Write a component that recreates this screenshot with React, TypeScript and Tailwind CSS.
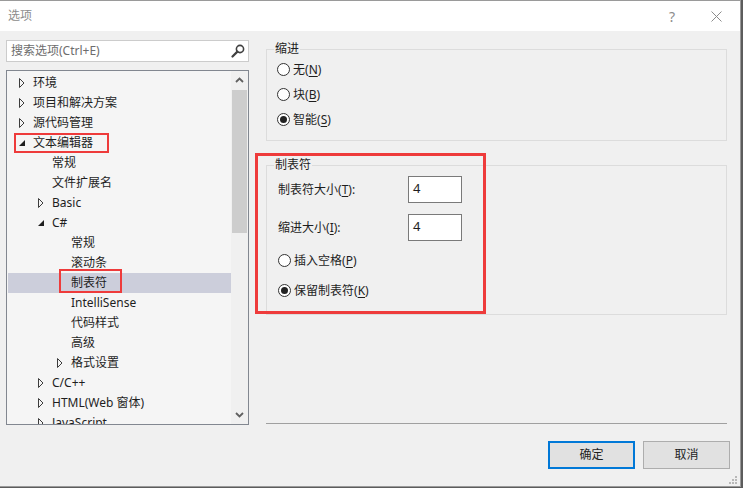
import React from "react";

type Node = {
  label: string;
  level: number;
  arrow?: "closed" | "open";
  selected?: boolean;
};

const tree: Node[] = [
  { label: "环境", level: 0, arrow: "closed" },
  { label: "项目和解决方案", level: 0, arrow: "closed" },
  { label: "源代码管理", level: 0, arrow: "closed" },
  { label: "文本编辑器", level: 0, arrow: "open" },
  { label: "常规", level: 1 },
  { label: "文件扩展名", level: 1 },
  { label: "Basic", level: 1, arrow: "closed" },
  { label: "C#", level: 1, arrow: "open" },
  { label: "常规", level: 2 },
  { label: "滚动条", level: 2 },
  { label: "制表符", level: 2, selected: true },
  { label: "IntelliSense", level: 2 },
  { label: "代码样式", level: 2 },
  { label: "高级", level: 2 },
  { label: "格式设置", level: 2, arrow: "closed" },
  { label: "C/C++", level: 1, arrow: "closed" },
  { label: "HTML(Web 窗体)", level: 1, arrow: "closed" },
  { label: "JavaScript", level: 1, arrow: "closed" },
];

const indent = ["pl-[6px]", "pl-[25px]", "pl-[44px]"];

function Arrow({ kind }: { kind?: "closed" | "open" }) {
  if (kind === "closed")
    return (
      <svg width="6" height="10" viewBox="0 0 6 10">
        <path d="M0.5 0.5 L5 5 L0.5 9.5 Z" fill="none" stroke="#3c3c3c" />
      </svg>
    );
  if (kind === "open")
    return (
      <svg width="6" height="6" viewBox="0 0 6 6">
        <path d="M6 0 L6 6 L0 6 Z" fill="#1e1e1e" />
      </svg>
    );
  return null;
}

function Radio({ checked, children }: { checked?: boolean; children: React.ReactNode }) {
  return (
    <div className="flex h-[25px] items-center">
      <span className="flex h-[13px] w-[13px] items-center justify-center rounded-full border border-[#333] bg-white">
        {checked && <span className="h-[7px] w-[7px] rounded-full bg-[#222]" />}
      </span>
      <span className="ml-[3px]">{children}</span>
    </div>
  );
}

function Key({ k }: { k: string }) {
  return (
    <>
      (<span className="underline underline-offset-2">{k}</span>)
    </>
  );
}

export default function App() {
  return (
    <div className="h-[488px] w-[743px] bg-[#5c5c5c] font-['Noto_Sans','Noto_Sans_CJK_SC',sans-serif] text-[12px] text-[#1e1e1e]">
      <div className="relative flex h-[487px] w-[741px] flex-col border-y border-r border-[#9a9a9a] bg-[#f0f0f0]">
        {/* title bar */}
        <div className="flex h-[30px] shrink-0 items-center bg-white pl-[8px]">
          <span className="text-[#8c8c8c]">选项</span>
          <span className="ml-auto mr-[36px] text-[14px] text-[#8c8c8c]">?</span>
          <svg width="11" height="11" viewBox="0 0 11 11" className="mr-[18px]">
            <path d="M0.5 0.5 L10.5 10.5 M10.5 0.5 L0.5 10.5" stroke="#8c8c8c" strokeWidth="1" />
          </svg>
        </div>

        <div className="flex flex-1">
          {/* left column */}
          <div className="w-[249px] shrink-0 pl-[6px] pt-[9px]">
            <div className="flex h-[22px] w-[243px] items-center border border-[#cccccc] bg-white pl-[4px] pr-[3px]">
              <span className="text-[#6d6d6d]">搜索选项(Ctrl+E)</span>
              <svg width="14" height="14" viewBox="0 0 14 14" className="ml-auto">
                <circle cx="9" cy="5" r="3.6" fill="none" stroke="#404040" strokeWidth="1.6" />
                <path d="M6.4 7.6 L1.5 12.5" stroke="#404040" strokeWidth="2.2" strokeLinecap="round" />
              </svg>
            </div>

            <div className="mt-[8px] flex h-[355px] w-[243px] border border-[#828790] bg-[#f5f5f5]">
              <div className="relative flex-1 overflow-hidden pl-[1px] pt-[2px]">
                {tree.map((n, i) => (
                  <div
                    key={i}
                    className={`flex h-[20px] items-center ${indent[n.level]} ${n.selected ? "bg-[#cccedb]" : ""}`}
                  >
                    <span className="flex w-[19px] items-center justify-center pr-[3px]">
                      <Arrow kind={n.arrow} />
                    </span>
                    <span className="whitespace-nowrap">{n.label}</span>
                  </div>
                ))}
                {/* annotation boxes */}
                <div className="absolute left-[7px] top-[62px] h-[20px] w-[95px] border-2 border-[#ee3b3b]" />
                <div className="absolute left-[52px] top-[198px] h-[24px] w-[63px] border-2 border-[#ee3b3b]" />
              </div>
              {/* scrollbar */}
              <div className="flex w-[17px] flex-col bg-[#f0f0f0]">
                <div className="flex h-[18px] items-center justify-center">
                  <svg width="9" height="6" viewBox="0 0 9 6">
                    <path d="M1 5 L4.5 1.5 L8 5" fill="none" stroke="#606060" strokeWidth="1.8" />
                  </svg>
                </div>
                <div className="mx-[1px] mt-[1px] h-[143px] bg-[#cdcdcd]" />
                <div className="mt-auto flex h-[18px] items-center justify-center">
                  <svg width="9" height="6" viewBox="0 0 9 6">
                    <path d="M1 1 L4.5 4.5 L8 1" fill="none" stroke="#606060" strokeWidth="1.8" />
                  </svg>
                </div>
              </div>
            </div>
          </div>

          {/* right column */}
          <div className="relative flex flex-1 flex-col pl-[17px]">
            <div className="relative mt-[18px] h-[92px] w-[461px] border border-[#dcdcdc] pl-[10px] pt-[7px]">
              <span className="absolute left-[7px] top-[-9px] bg-[#f0f0f0] px-[1px] leading-[16px]">缩进</span>
              <Radio>
                无<Key k="N" />
              </Radio>
              <Radio>
                块<Key k="B" />
              </Radio>
              <Radio checked>
                智能<Key k="S" />
              </Radio>
            </div>

            <div className="relative mt-[24px] h-[150px] w-[461px] border border-[#dcdcdc] pl-[11px] pt-[10px]">
              <span className="absolute left-[7px] top-[-9px] bg-[#f0f0f0] px-[1px] leading-[16px]">制表符</span>
              <div className="flex h-[27px] items-center">
                <span className="w-[130px]">
                  制表符大小<Key k="T" />:
                </span>
                <div className="flex h-[27px] w-[54px] items-center border border-[#7a7a7a] bg-white pb-[2px] pl-[4px] text-[13px]">
                  4
                </div>
              </div>
              <div className="mt-[11px] flex h-[27px] items-center">
                <span className="w-[130px]">
                  缩进大小<Key k="I" />:
                </span>
                <div className="flex h-[27px] w-[54px] items-center border border-[#7a7a7a] bg-white pb-[2px] pl-[4px] text-[13px]">
                  4
                </div>
              </div>
              <div className="mt-[7px]">
                <Radio>
                  插入空格<Key k="P" />
                </Radio>
              </div>
              <div className="mt-[5px]">
                <Radio checked>
                  保留制表符<Key k="K" />
                </Radio>
              </div>
            </div>

            <div className="mt-[108px] h-px w-[461px] bg-[#a0a0a0]" />

            <div className="mt-[17px] flex gap-[8px] pl-[282px]">
              <button className="flex h-[28px] w-[87px] items-center justify-center border-2 border-[#0078d7] bg-[#e1e1e1]">
                确定
              </button>
              <button className="flex h-[28px] w-[87px] items-center justify-center border border-[#adadad] bg-[#e1e1e1]">
                取消
              </button>
            </div>

            {/* annotation box */}
            <div className="absolute left-[6px] top-[122px] h-[161px] w-[231px] border-[3px] border-[#ee3b3b]" />
          </div>
        </div>

        {/* resize grip */}
        <svg width="9" height="9" viewBox="0 0 9 9" className="absolute bottom-[1px] right-[2px]">
          <rect x="6" y="0" width="2" height="2" fill="#b8b8b8" />
          <rect x="3" y="3" width="2" height="2" fill="#b8b8b8" />
          <rect x="6" y="3" width="2" height="2" fill="#b8b8b8" />
          <rect x="0" y="6" width="2" height="2" fill="#b8b8b8" />
          <rect x="3" y="6" width="2" height="2" fill="#b8b8b8" />
          <rect x="6" y="6" width="2" height="2" fill="#b8b8b8" />
        </svg>
      </div>
    </div>
  );
}
